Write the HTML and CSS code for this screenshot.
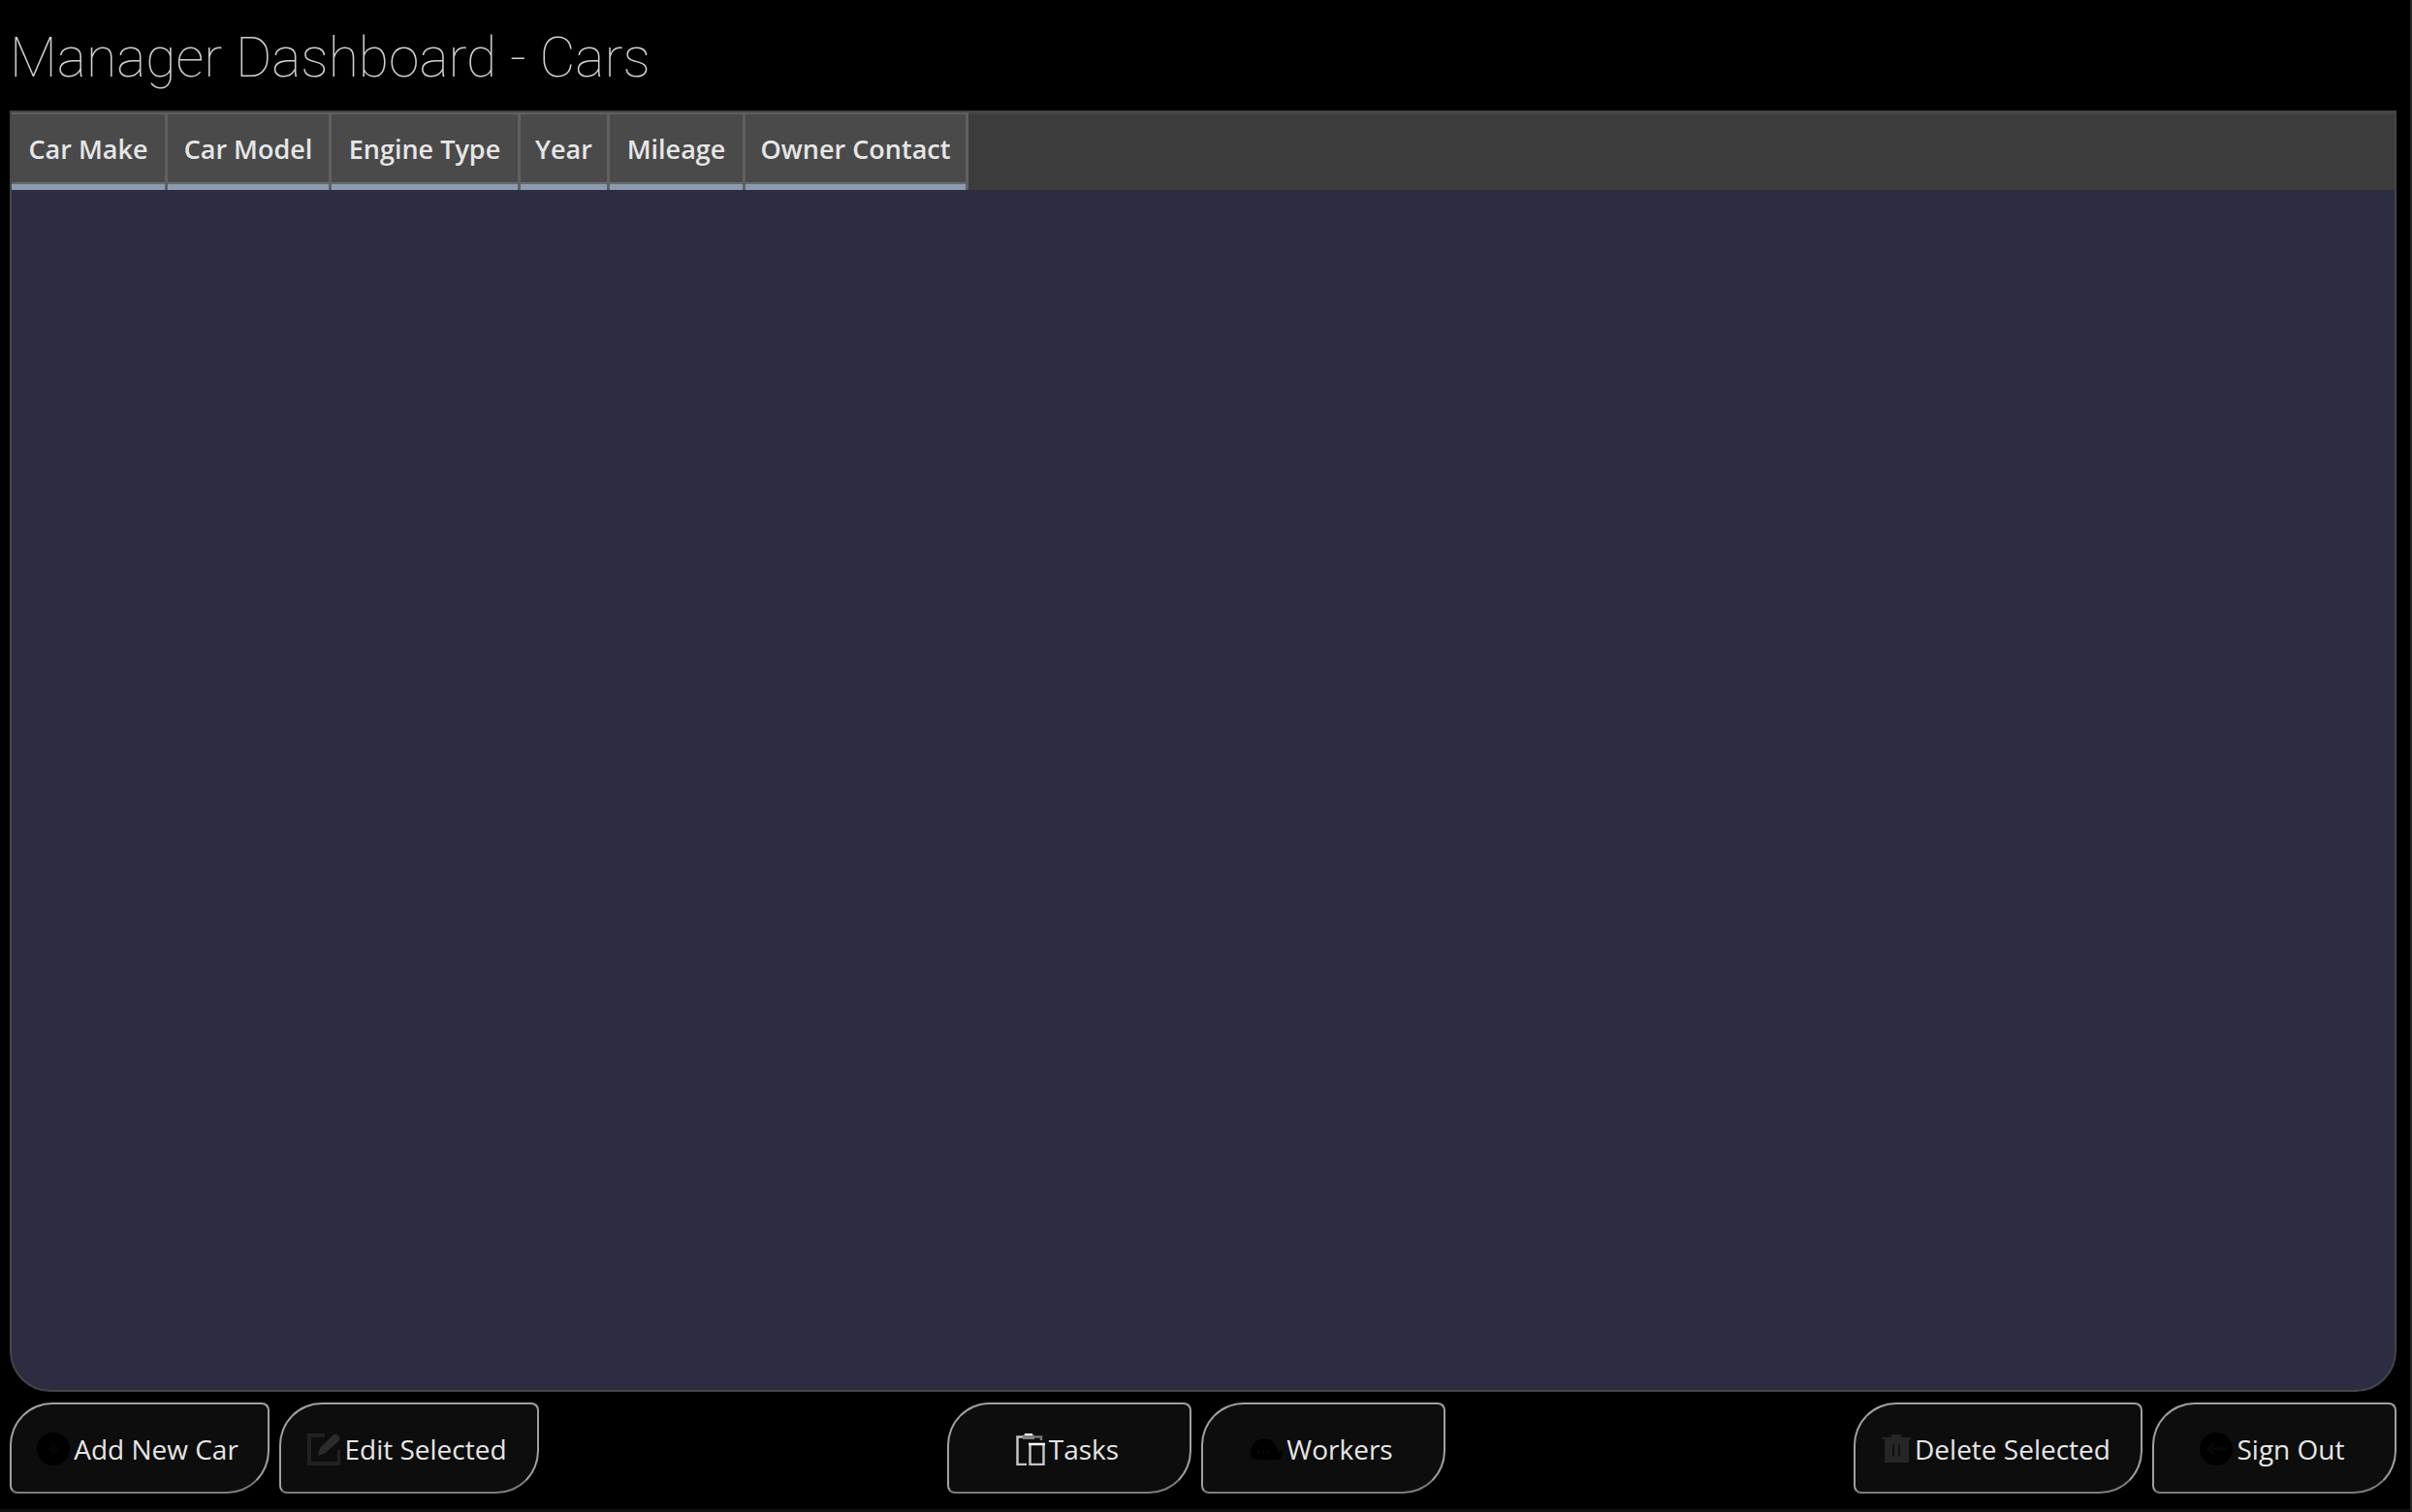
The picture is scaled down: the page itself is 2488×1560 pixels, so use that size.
FILE: index.html
```html
<!DOCTYPE html>
<html lang="en">
<head>
<meta charset="utf-8">
<title>Manager Dashboard - Cars</title>
<link rel="stylesheet" href="styles.css">
</head>
<body>
<main class="dashboard">
  <h1 class="title">Manager Dashboard - Cars</h1>
  <section class="panel">
    <table class="cars">
      <colgroup>
        <col class="col-make"><col class="col-model"><col class="col-engine"><col class="col-year"><col class="col-mileage"><col class="col-owner"><col>
      </colgroup>
      <thead>
        <tr>
          <th scope="col">Car Make</th>
          <th scope="col">Car Model</th>
          <th scope="col">Engine Type</th>
          <th scope="col">Year</th>
          <th scope="col">Mileage</th>
          <th scope="col">Owner Contact</th>
          <td class="filler"></td>
        </tr>
      </thead>
      <tbody></tbody>
    </table>
  </section>
  <footer class="actions">
    <div class="group">
      <button type="button" class="btn btn-medium">
        <svg class="icon" viewBox="0 0 34 34"><circle cx="17" cy="17" r="17" fill="#000"/><path d="M17 12v10M12 17h10" stroke="#060606" stroke-width="3"/></svg>
        Add New Car
      </button>
      <button type="button" class="btn btn-medium">
        <svg class="icon" viewBox="0 0 34 34"><path d="M18 3H2v29h31V18" fill="none" stroke="#212121" stroke-width="4"/><path d="M11 24l2-8L26 3q3-3 6 0t0 6L19 21z" fill="#2b2b2b"/></svg>
        Edit Selected
      </button>
    </div>
    <div class="group">
      <button type="button" class="btn">
        <svg class="icon icon-narrow" viewBox="0 0 30 34"><g fill="none" stroke="#c4c4c4" stroke-width="2.500"><path d="M11 33H1.500V4.500H8"/><path d="M14.500 12v21h14V12"/></g><path d="M18 4.500h8V8" fill="none" stroke="#777" stroke-width="2.500"/><path d="M13 12h17" stroke="#fff" stroke-width="2.500"/><path d="M7 4q0-3 6-3t6 3v3H7z" fill="#808080"/><path d="M9 2h8" stroke="#fff" stroke-width="2"/></svg>
        Tasks
      </button>
      <button type="button" class="btn">
        <svg class="icon" viewBox="0 0 34 34"><path d="M1 20Q3 7 15 6q11 0 14 14l2 1 2-3q2 6-2 10h-8q-12 1-20-1-3-3-2-7z" fill="#000"/><path d="M8 22l2-3M14 22v-3M20 22l-1-3" stroke="#080808" stroke-width="2"/></svg>
        Workers
      </button>
    </div>
    <div class="group">
      <button type="button" class="btn btn-wide">
        <svg class="icon icon-narrow" viewBox="0 0 30 34"><path d="M0 5h9l2-3h8l2 3h9v2h-2v24H3V7H0z" fill="#262626"/><path d="M12 12v12M18 12v12" stroke="#111" stroke-width="2"/></svg>
        Delete Selected
      </button>
      <button type="button" class="btn">
        <svg class="icon" viewBox="0 0 34 34"><circle cx="17" cy="17" r="17" fill="#000"/><path d="M28 17H9M15 11l-6 6 6 6" fill="none" stroke="#080808" stroke-width="3"/></svg>
        Sign Out
      </button>
    </div>
  </footer>
</main>
</body>
</html>
```
FILE: styles.css
```css
* {
  box-sizing: border-box;
}

body {
  margin: 0;
  background: #000;
  color: #e6e6e6;
  font-family: "Noto Sans", "Open Sans", sans-serif;
}

.dashboard {
  display: flex;
  flex-direction: column;
  min-height: 100vh;
  padding: 20px 14px 16px 10px;
  border-right: 2px solid #262626;
  border-bottom: 3px solid #101010;
}

.title {
  margin: 0 0 14px;
  font: 100 57px/80px Roboto, sans-serif;
  color: #d0d0d0;
}

.panel {
  flex: 1;
  overflow: hidden;
  border: 2px solid #454545;
  border-radius: 0 0 42px 42px;
  background: #2c2d42;
}

.cars {
  width: 100%;
  table-layout: fixed;
  border-collapse: separate;
  border-spacing: 0;
}

.col-make { width: 161px; }
.col-model { width: 169px; }
.col-engine { width: 195px; }
.col-year { width: 92px; }
.col-mileage { width: 140px; }
.col-owner { width: 230px; }

.cars th {
  height: 80px;
  padding: 0 0 6px;
  border-top: 2px solid #606060;
  border-right: 3px solid #606060;
  background: #4a4a4a;
  box-shadow: inset 0 -6px #8d9ab0, inset 0 -8px #66696f;
  font-family: "Open Sans", "Noto Sans", sans-serif;
  font-size: 27px;
  font-weight: 600;
  line-height: 36px;
  white-space: nowrap;
}

.cars .filler {
  padding: 0;
  border-top: 2px solid #454545;
  background: #3c3c3c;
}

.actions {
  display: flex;
  justify-content: space-between;
  margin-top: 11px;
}

.group {
  display: flex;
  gap: 10px;
}

.btn {
  display: flex;
  align-items: center;
  justify-content: center;
  gap: 4px;
  min-width: 252px;
  height: 94px;
  padding: 2px 4px 0 0;
  border: 2px solid #a0a0a0;
  border-bottom-color: #7c7c7c;
  border-radius: 44px 8px;
  background: #0d0d0d;
  color: #e6e6e6;
  font: 400 28px/36px "Open Sans", "Noto Sans", sans-serif;
  white-space: nowrap;
}

.btn-medium { min-width: 268px; }
.btn-wide { min-width: 298px; }

.icon {
  width: 34px;
  height: 34px;
}

.icon-narrow { width: 30px; }
```
